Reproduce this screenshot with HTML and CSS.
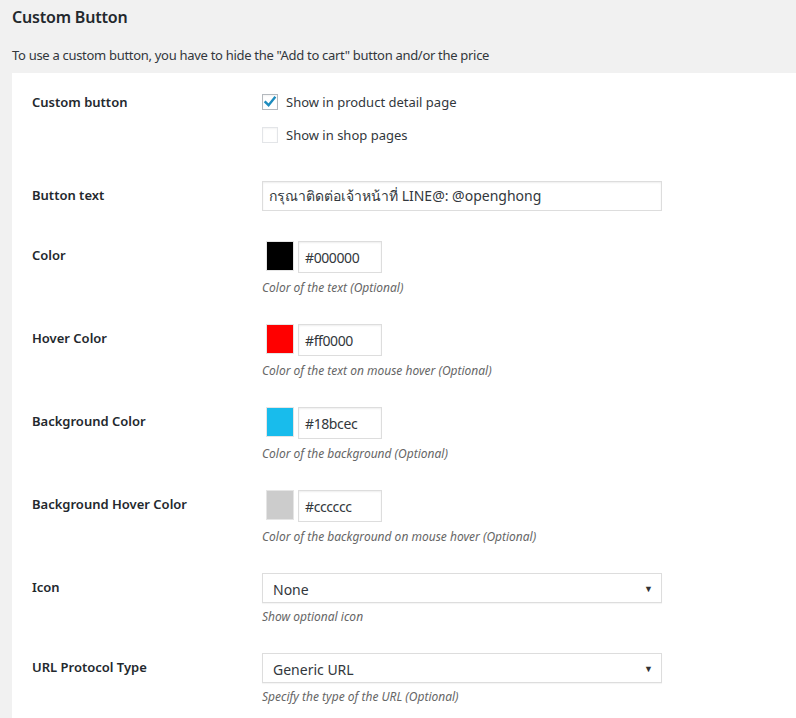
FILE: index.html
```html
<!DOCTYPE html>
<html>
<head>
<meta charset="utf-8">
<link rel="stylesheet" href="styles.css">
</head>
<body>
<div class="page">
  <h2 class="title">Custom Button</h2>
  <p class="intro">To use a custom button, you have to hide the "Add to cart" button and/or the price</p>
  <div class="panel">
    <div class="row row-checks">
      <div class="label">Custom button</div>
      <div class="field">
        <label class="check"><span class="box checked"><svg viewBox="0 0 16 16" width="16" height="16"><path d="M3.5 8.2 L6.6 11.2 L12.6 3.8" fill="none" stroke="#1e8cbe" stroke-width="2.4" stroke-linecap="square"/></svg></span>Show in product detail page</label>
        <label class="check"><span class="box"></span>Show in shop pages</label>
      </div>
    </div>
    <div class="row">
      <div class="label">Button text</div>
      <div class="field">
        <div class="text-input wide">กรุณาติดต่อเจ้าหน้าที่ LINE@: @openghong</div>
      </div>
    </div>
    <div class="row">
      <div class="label">Color</div>
      <div class="field has-desc">
        <div class="color-row"><span class="swatch sw-black"></span><span class="text-input hex">#000000</span></div>
        <p class="desc">Color of the text (Optional)</p>
      </div>
    </div>
    <div class="row">
      <div class="label">Hover Color</div>
      <div class="field has-desc">
        <div class="color-row"><span class="swatch sw-red"></span><span class="text-input hex">#ff0000</span></div>
        <p class="desc">Color of the text on mouse hover (Optional)</p>
      </div>
    </div>
    <div class="row">
      <div class="label">Background Color</div>
      <div class="field has-desc">
        <div class="color-row"><span class="swatch sw-blue"></span><span class="text-input hex">#18bcec</span></div>
        <p class="desc">Color of the background (Optional)</p>
      </div>
    </div>
    <div class="row">
      <div class="label">Background Hover Color</div>
      <div class="field has-desc">
        <div class="color-row"><span class="swatch sw-gray"></span><span class="text-input hex">#cccccc</span></div>
        <p class="desc">Color of the background on mouse hover (Optional)</p>
      </div>
    </div>
    <div class="row">
      <div class="label">Icon</div>
      <div class="field has-desc">
        <div class="select wide"><span>None</span><span class="arrow">▼</span></div>
        <p class="desc desc-sel">Show optional icon</p>
      </div>
    </div>
    <div class="row">
      <div class="label">URL Protocol Type</div>
      <div class="field has-desc">
        <div class="select wide"><span>Generic URL</span><span class="arrow">▼</span></div>
        <p class="desc desc-sel">Specify the type of the URL (Optional)</p>
      </div>
    </div>
  </div>
</div>
</body>
</html>
```
FILE: styles.css
```css
html, body {
  margin: 0;
  padding: 0;
  background: #f1f1f1;
}
body {
  font-family: "Noto Sans", "Open Sans", sans-serif;
  color: #23282d;
  font-size: 13px;
}
.page {
  padding: 0 0 0 12px;
}
.title {
  margin: 0;
  padding-top: 5px;
  font-size: 16px;
  font-weight: 600;
  line-height: 24px;
  letter-spacing: -0.2px;
  color: #23282d;
}
.intro {
  margin: 17px 0 0;
  font-size: 13px;
  line-height: 18px;
  letter-spacing: -0.3px;
  color: #32373c;
}
.panel {
  margin-top: 9px;
  background: #fff;
  padding: 0 0 20px 20px;
  min-height: 700px;
}
.row {
  display: flex;
  align-items: flex-start;
}
.label {
  width: 230px;
  flex: none;
  padding: 20px 0;
  font-weight: 600;
  font-size: 13px;
  line-height: 18px;
  color: #23282d;
}
.field {
  padding: 15px 0;
}
.field.has-desc {
  padding-bottom: 13px;
}
.row-checks .field {
  padding-bottom: 17px;
}
.check {
  display: flex;
  align-items: center;
  height: 28px;
  font-size: 13px;
  color: #32373c;
}
.check + .check {
  margin-top: 5px;
}
.box {
  box-sizing: border-box;
  width: 16px;
  height: 16px;
  margin-right: 8px;
  border: 1px solid #e3e5e8;
  box-shadow: inset 0 1px 2px rgba(0,0,0,.05);
  display: flex;
}
.box.checked {
  border-color: #b4b9be;
}
.box svg {
  margin: -1px;
}
.text-input {
  box-sizing: border-box;
  border: 1px solid #ddd;
  box-shadow: inset 0 1px 2px rgba(0,0,0,.07);
  background: #fff;
  font-size: 14px;
  color: #32373c;
  display: flex;
  align-items: center;
}
.wide {
  width: 400px;
  height: 30px;
  padding: 0 6px;
}
.color-row {
  display: flex;
  align-items: flex-start;
}
.swatch {
  box-sizing: border-box;
  width: 28px;
  height: 30px;
  border: 1px solid #e5e5e5;
  margin: 0 4px 0 4px;
}
.sw-black { background: #000; }
.sw-red { background: #ff0000; }
.sw-blue { background: #18bcec; }
.sw-gray { background: #cccccc; }
.hex {
  width: 84px;
  height: 32px;
  padding: 0 6px;
  letter-spacing: -0.4px;
}
.desc {
  margin: 6px 0 0;
  font-size: 12px;
  font-style: italic;
  line-height: 17px;
  color: #666;
}
.desc-sel {
  margin-top: 5px;
}
.select {
  box-sizing: border-box;
  border: 1px solid #ddd;
  box-shadow: 0 1px 1px rgba(0,0,0,.04);
  background: #fff;
  display: flex;
  align-items: center;
  justify-content: space-between;
  padding: 2px 8px 0 10px;
  font-size: 14px;
  color: #32373c;
}
.arrow {
  font-size: 9px;
  color: #333;
  margin-top: -2px;
}
```
